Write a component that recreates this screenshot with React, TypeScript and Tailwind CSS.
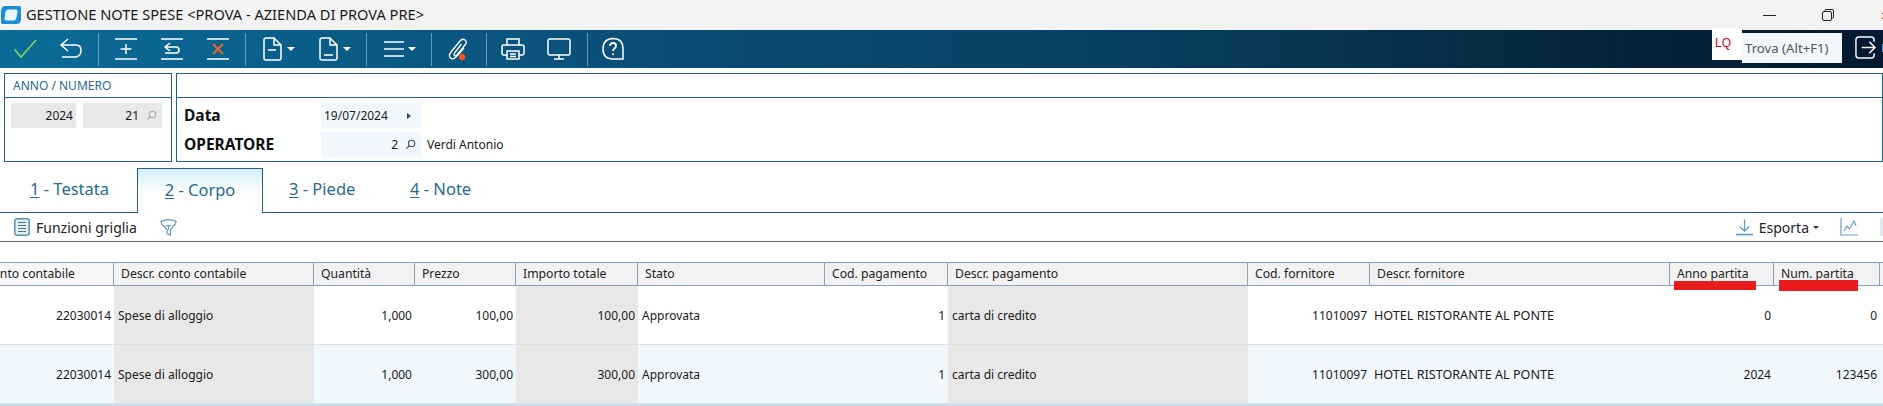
const columns = [
  { title: 'Conto contabile', clip: true },
  { title: 'Descr. conto contabile' },
  { title: 'Quantità' },
  { title: 'Prezzo' },
  { title: 'Importo totale' },
  { title: 'Stato' },
  { title: 'Cod. pagamento' },
  { title: 'Descr. pagamento' },
  { title: 'Cod. fornitore' },
  { title: 'Descr. fornitore' },
  { title: 'Anno partita' },
  { title: 'Num. partita' },
];

const rows = [
  { price: '100,00', total: '100,00', year: '0', num: '0', bg: 'bg-white' },
  { price: '300,00', total: '300,00', year: '2024', num: '123456', bg: 'bg-[#f0f8fe]' },
];

const gridCols =
  'grid grid-cols-[114px_200px_101px_101px_122px_187px_123px_300px_122px_300px_104px_106px_3px]';

function Caret({ ml }: { ml: string }) {
  return <span className={`${ml} w-0 h-0 border-x-[4px] border-x-transparent border-t-[4px] border-t-white`} />;
}

function Sep({ ml }: { ml: string }) {
  return <span className={`w-px h-[33px] bg-white/40 ${ml}`} />;
}

function ToolIcon({ ml, children }: { ml: string; children: React.ReactNode }) {
  return (
    <svg
      viewBox="0 0 24 24"
      fill="none"
      stroke="white"
      strokeWidth="1.5"
      className={`w-[24px] h-[24px] shrink-0 ${ml}`}
    >
      {children}
    </svg>
  );
}

function SearchGlass({ color }: { color: string }) {
  return (
    <svg viewBox="0 0 12 12" fill="none" stroke={color} strokeWidth="1.2" className="w-[11px] h-[11px] shrink-0">
      <circle cx="7.2" cy="4.8" r="3.4" />
      <path d="M4.8 7.2 1.5 10.5" />
    </svg>
  );
}

function Cell({
  children,
  right,
  gray,
  caps,
}: {
  children: React.ReactNode;
  right?: boolean;
  gray?: boolean;
  caps?: boolean;
}) {
  return (
    <div
      className={`flex items-center pt-[2px] text-[#1a1a1a] whitespace-nowrap overflow-hidden ${
        caps ? 'text-[12.6px]' : 'text-[12px]'
      } ${right ? 'justify-end pr-[3px]' : 'pl-[4px]'} ${gray ? 'bg-[#e8e8e8]' : ''}`}
    >
      {children}
    </div>
  );
}

function Tab({ n, label, className }: { n: string; label: string; className: string }) {
  return (
    <div className={`flex items-center text-[16.5px] text-[#2a6a8c] whitespace-nowrap ${className}`}>
      <span className="underline underline-offset-2">{n}</span>
      <span>&nbsp;- {label}</span>
    </div>
  );
}

export default function App() {
  return (
    <div className="relative w-[1883px] h-[406px] overflow-hidden bg-white font-['Noto_Sans',sans-serif]">
      {/* title bar */}
      <div className="h-[30px] bg-[#f2f2f2] flex items-center">
        <svg viewBox="0 0 20 18" className="w-[20px] h-[18px] ml-[1px] mb-[1px] shrink-0">
          <path d="M5 0h13q2 0 2 2v11q0 5-5 5H2q-2 0-2-2V5q0-5 5-5Z" fill="#1a8fd6" />
          <path d="M7 3.500h8q1.800 0 1.500 1.800l-1 6.500q-.5 2.700-3 2.700H5q-1.800 0-1.500-1.800l1-6.500Q5 3.500 7 3.500Z" fill="#eaf5fc" />
        </svg>
        <span className="ml-[5px] text-[14.6px] text-[#1a1a1a] whitespace-nowrap">
          GESTIONE NOTE SPESE &lt;PROVA - AZIENDA DI PROVA PRE&gt;
        </span>
        <span className="ml-auto w-[13px] h-px bg-[#222]" />
        <svg viewBox="0 0 12 12" fill="none" stroke="#222" className="ml-[46px] w-[12px] h-[12px]">
          <rect x="0.5" y="2.5" width="9" height="9" rx="1.500" />
          <path d="M3 2.500V1.500q0-1 1-1h6q1.500 0 1.500 1.500v6q0 1-1 1h-1" />
        </svg>
        <span className="ml-[47px] w-[2px] text-[14px] text-[#222] overflow-hidden">×</span>
      </div>

      {/* main toolbar */}
      <div className="relative h-[38px] flex items-center bg-[linear-gradient(90deg,#0b6c98_0%,#0a5a85_20%,#0a4a70_40%,#083f60_60%,#07304a_75%,#04213a_88%,#031a30_100%)]">
        <ToolIcon ml="ml-[13px]">
          <path d="M1.500 12.500 8 20 23 3" stroke="#7ed957" strokeWidth="1.600" />
        </ToolIcon>
        <ToolIcon ml="ml-[22px]">
          <path d="M9 2 2 8l7 6M2 8h15q5 0 5 5.500T17 20H3" />
        </ToolIcon>
        <Sep ml="ml-[15px]" />
        <ToolIcon ml="ml-[15px]">
          <path d="M1 2h22M1 22h22M12 7v10M6.500 12h11" />
        </ToolIcon>
        <ToolIcon ml="ml-[22px]">
          <path d="M1 2h22M1 22h22M10 6l-5 4 5 4M5 10h11q3 0 3 3t-3 3H5" />
        </ToolIcon>
        <ToolIcon ml="ml-[22px]">
          <path d="M1 2h22M1 22h22" />
          <path d="m7 7 10 10M17 7 7 17" stroke="#e0682b" strokeWidth="2" />
        </ToolIcon>
        <Sep ml="ml-[15px]" />
        <ToolIcon ml="ml-[14px]">
          <path d="M4 3q0-2 2-2h8l7 7v13q0 2-2 2H6q-2 0-2-2ZM14 1v7h7M8 13h8" />
        </ToolIcon>
        <Caret ml="ml-[3px]" />
        <ToolIcon ml="ml-[21px]">
          <path d="M4 3q0-2 2-2h8l7 7v13q0 2-2 2H6q-2 0-2-2ZM14 1v7h7M8 18h9" />
        </ToolIcon>
        <Caret ml="ml-[3px]" />
        <Sep ml="ml-[15px]" />
        <ToolIcon ml="ml-[15px]">
          <path d="M2 5h20M2 12h20M2 19h20" />
        </ToolIcon>
        <Caret ml="ml-[2px]" />
        <Sep ml="ml-[15px]" />
        <ToolIcon ml="ml-[14px]">
          <path d="M18 11 10 20q-3 3-5.500 1T5 15L14 4q2.500-3 5-1t0 5l-8 10q-1.500 1.500-2.500.5t0-2.500l7-9" strokeWidth="1.300" />
          <circle cx="16" cy="20" r="3.200" fill="#f0581f" stroke="none" />
        </ToolIcon>
        <Sep ml="ml-[16px]" />
        <ToolIcon ml="ml-[14px]">
          <path d="M6 8V2h12v6M6 18H3q-2 0-2-2v-6q0-2 2-2h18q2 0 2 2v6q0 2-2 2h-3M6 14h12v8H6ZM9 17h6M9 19.500h6" />
        </ToolIcon>
        <ToolIcon ml="ml-[22px]">
          <path d="M3 2h18q2 0 2 2v12q0 2-2 2H3q-2 0-2-2V4q0-2 2-2ZM12 18v4M7 22h10" />
        </ToolIcon>
        <Sep ml="ml-[16px]" />
        <ToolIcon ml="ml-[13px]">
          <path d="M12 1.500q10 0 10 10.500v10H12Q2 22 2 12T12 1.500Z" />
          <path d="M9 9q0-3 3-3t3 2.800q0 1.700-1.500 2.700T12 14M12 16.500v1.500" strokeWidth="1.800" />
        </ToolIcon>

        {/* search + exit */}
        <div className="absolute left-[1712px] top-[-2px] w-[30px] h-[32px] bg-white text-[12px] text-[#d0021b] pl-[3px] pt-[6px] font-['Liberation_Sans',sans-serif]">
          LQ
        </div>
        <div className="absolute left-[1742px] top-[3px] w-[100px] h-[30px] bg-[#f0f8fe] flex items-center pl-[3px] pt-[1px] text-[13.2px] text-[#555]">
          Trova (Alt+F1)
        </div>
        <svg viewBox="0 0 22 24" fill="none" stroke="white" strokeWidth="1.500" className="absolute left-[1855px] top-[6px] w-[21px] h-[23px]">
          <path d="M20 6V4q0-3-3-3H4Q1 1 1 4v16q0 3 3 3h13q3 0 3-3v-2M7 12h14M15 6l6 6-6 6" />
        </svg>
        <span className="absolute left-[1882px] top-[14px] w-[1px] h-[8px] bg-[#3b9be0]" />
      </div>

      {/* header panels */}
      <div className="flex mt-[5px] ml-[4px] gap-[4px] h-[89px]">
        <div className="w-[168px] border border-[#1f6480] flex flex-col">
          <div className="h-[24px] border-b border-[#1f6480] flex items-center pl-[8px] text-[12px] text-[#2a6a8c]">
            ANNO / NUMERO
          </div>
          <div className="flex pl-[6px] pt-[5px] gap-[7px]">
            <div className="w-[65px] h-[25px] bg-[#e8e8e8] flex items-center justify-end pr-[3px] text-[12px] text-[#1a1a1a]">
              2024
            </div>
            <div className="w-[79px] h-[25px] bg-[#e8e8e8] flex items-center justify-end pr-[5px] gap-[7px] text-[12px] text-[#1a1a1a]">
              21
              <SearchGlass color="#aaa" />
            </div>
          </div>
        </div>
        <div className="flex-1 border border-[#1f6480] flex flex-col">
          <div className="h-[24px] border-b border-[#1f6480]" />
          <div className="flex items-center h-[25px] mt-[5px] pl-[7px]">
            <span className="w-[137px] text-[15.5px] font-bold text-[#111]">Data</span>
            <div className="w-[100px] h-[25px] bg-[#f0f8fe] flex items-center pl-[3px] text-[12px] text-[#1a1a1a]">
              19/07/2024
              <span className="ml-[19px] w-0 h-0 border-y-[3px] border-y-transparent border-l-[4px] border-l-[#445]" />
            </div>
          </div>
          <div className="flex items-center h-[25px] mt-[4px] pl-[7px]">
            <span className="w-[137px] text-[15.5px] font-bold text-[#111]">OPERATORE</span>
            <div className="w-[100px] h-[25px] bg-[#f0f8fe] flex items-center justify-end pr-[5px] gap-[7px] text-[12px] text-[#1a1a1a]">
              2
              <SearchGlass color="#445" />
            </div>
            <span className="ml-[6px] text-[12px] text-[#1a1a1a]">Verdi Antonio</span>
          </div>
        </div>
      </div>

      {/* tabs */}
      <div className="relative flex h-[45px] mt-[6px] border-b border-[#1f6480]">
        <Tab n="1" label="Testata" className="ml-[30px] mb-[1px] w-[80px]" />
        <div className="relative z-10 ml-[27px] w-[126px] h-[45px] border border-b-0 border-[#1f6480] bg-[linear-gradient(180deg,#d5eefa_0%,#ffffff_55%)] flex items-center justify-center pb-[1px]">
          <Tab n="2" label="Corpo" className="" />
        </div>
        <Tab n="3" label="Piede" className="ml-[26px] mb-[1px] w-[67px]" />
        <Tab n="4" label="Note" className="ml-[54px] mb-[1px]" />
      </div>

      {/* grid toolbar */}
      <div className="h-[29px] border-b border-[#5a6670] flex items-center">
        <svg viewBox="0 0 16 18" fill="none" className="ml-[14px] w-[16px] h-[18px] shrink-0">
          <rect x="0.800" y="0.800" width="14.400" height="16.400" rx="2.500" fill="#e4eff6" stroke="#5d93b3" strokeWidth="1.500" />
          <path d="M4 4.500h8M4 7.500h8M4 10.500h8M4 13.500h8" stroke="#4a6f88" />
        </svg>
        <span className="ml-[6px] w-[101px] text-[14px] text-[#222] whitespace-nowrap">Funzioni griglia</span>
        <svg viewBox="0 0 18 18" fill="none" stroke="#6b9db8" strokeWidth="1.300" className="ml-[23px] w-[17px] h-[18px] shrink-0">
          <path d="M1 3q8-3.500 16 0l-1 3-5 6v5.500l-3.500-1.500v-4L2 6ZM6 7.500h6M9 7.500V12" />
        </svg>
        <svg viewBox="0 0 18 18" fill="none" stroke="#5d9cc0" strokeWidth="1.300" className="ml-auto w-[17px] h-[18px] shrink-0">
          <path d="M9 1v12M4 8.500 9 13.500l5-5" />
          <path d="M0 17h18" strokeWidth="1.800" />
        </svg>
        <span className="ml-[6px] text-[14px] text-[#222]">Esporta</span>
        <span className="ml-[4px] w-0 h-0 border-x-[3px] border-x-transparent border-t-[3px] border-t-[#333]" />
        <svg viewBox="0 0 18 18" fill="none" stroke="#6aa2c2" strokeWidth="1.200" className="ml-[21px] w-[18px] h-[18px] shrink-0">
          <path d="M1 0v17h17M4 13l3-5 2.500 3L14 3l2 5" />
        </svg>
        <span className="ml-[22px] w-[3px] h-[18px] bg-[#dde8ef]" />
      </div>

      {/* data grid */}
      <div className="mt-[20px]">
        <div className={`${gridCols} h-[24px] border-y border-[#8ba2bc] bg-[#f2f2f2]`}>
          {columns.map((c) => (
            <div
              key={c.title}
              className={`flex items-center text-[12.2px] text-[#222] whitespace-nowrap overflow-hidden border-r border-[#8ba2bc] ${
                c.clip ? 'justify-end pr-[38px] bg-[#f7f7f7]' : 'pl-[7px]'
              }`}
            >
              {c.title}
            </div>
          ))}
          <div />
        </div>
        {rows.map((r) => (
          <div key={r.num + r.year} className={`${gridCols} h-[59px] border-b border-[#dbe2e8] ${r.bg}`}>
            <Cell right>22030014</Cell>
            <Cell gray>Spese di alloggio</Cell>
            <Cell right>1,000</Cell>
            <Cell right>{r.price}</Cell>
            <Cell right gray>{r.total}</Cell>
            <Cell>Approvata</Cell>
            <Cell right>1</Cell>
            <Cell gray>carta di credito</Cell>
            <Cell right>11010097</Cell>
            <Cell caps>HOTEL RISTORANTE AL PONTE</Cell>
            <Cell right>{r.year}</Cell>
            <Cell right>{r.num}</Cell>
            <div />
          </div>
        ))}
        <div className="h-[3px] bg-[#c5dcf0]" />
      </div>

      {/* red marks drawn over the grid */}
      <span className="absolute left-[1674px] top-[281px] w-[82px] h-[9px] bg-[#e81c1c]" />
      <span className="absolute left-[1779px] top-[280px] w-[79px] h-[11px] bg-[#e81c1c]" />
    </div>
  );
}
